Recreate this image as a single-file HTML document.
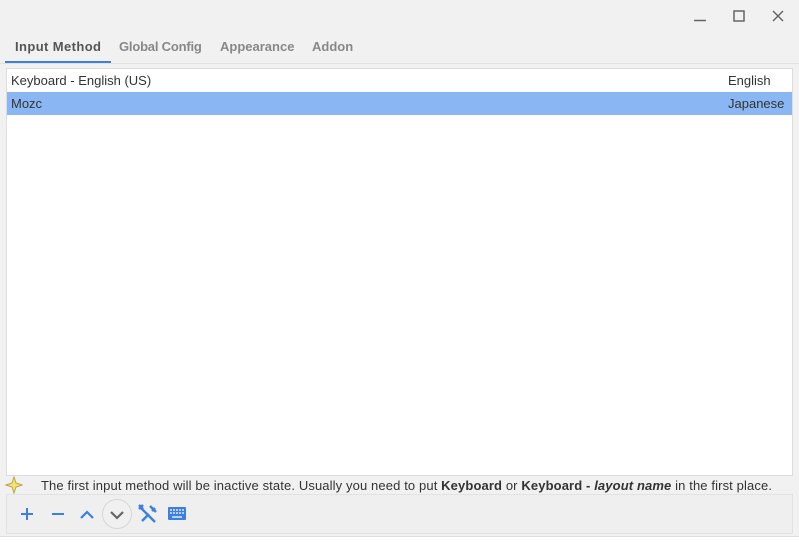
<!DOCTYPE html>
<html><head><meta charset="utf-8"><style>
body{margin:0;width:799px;height:541px;background:#f1f1f1;font-family:"Liberation Sans",sans-serif;font-size:13px;color:#333;position:relative;overflow:hidden}
.abs{position:absolute}
.tab{position:absolute;top:39px;font-weight:bold;color:#888;font-size:13px}
.row{position:absolute;left:7px;width:785px;height:23px;line-height:23px}
</style></head><body>
<div class="abs" style="left:0;top:536px;width:799px;height:5px;background:#fff;border-top:1px solid #ddd"></div>
<svg class="abs" style="left:690px;top:8px" width="100" height="16">
<path d="M4 12.5H16" stroke="#666" stroke-width="1.5"/>
<rect x="44" y="3" width="10" height="10" fill="none" stroke="#666" stroke-width="1.5"/>
<path d="M83 3L93 13M93 3L83 13" stroke="#666" stroke-width="1.5"/>
</svg>
<div class="tab" style="left:15px;color:#555;letter-spacing:0.4px">Input Method</div>
<div class="tab" style="left:119px;letter-spacing:-0.2px">Global Config</div>
<div class="tab" style="left:220px">Appearance</div>
<div class="tab" style="left:312px">Addon</div>
<div class="abs" style="left:5px;top:61px;width:106px;height:2px;background:#3d7fe0"></div>
<div class="abs" style="left:0;top:63px;width:799px;height:1px;background:#e2e2e2"></div>
<div class="abs" style="left:6px;top:68px;width:785px;height:406px;background:#fff;border:1px solid #ddd"></div>
<div class="row" style="top:69px"><span style="margin-left:4px">Keyboard - English (US)</span><span style="position:absolute;left:721px">English</span></div>
<div class="row" style="top:92px;background:#8ab6f3"><span style="margin-left:4px">Mozc</span><span style="position:absolute;left:721px">Japanese</span></div>
<svg class="abs" style="left:5px;top:476px" width="18" height="18"><path d="M9 1L11 7L17 9L11 11L9 17L7 11L1 9L7 7Z" fill="#f3e27a" stroke="#b9a640" stroke-width="1"/></svg>
<div class="abs" style="left:41px;top:478px;white-space:nowrap;font-size:13px;letter-spacing:0.12px">The first input method will be inactive state. Usually you need to put <b>Keyboard</b> or <b>Keyboard - <i>layout name</i></b> in the first place.</div>
<div class="abs" style="left:6px;top:494px;width:785px;height:38px;background:#efefef;border:1px solid #e2e2e2"></div>
<svg class="abs" style="left:6px;top:494px" width="200" height="40">
<path d="M15 20H27M21 14V26" stroke="#3d7fe0" stroke-width="2"/>
<path d="M46 20H58" stroke="#3d7fe0" stroke-width="2"/>
<path d="M75 24L81 18L87 24" fill="none" stroke="#3d7fe0" stroke-width="2.2"/>
<circle cx="111" cy="20" r="14.5" fill="#f0f0f0" stroke="#d6d6d6"/>
<path d="M105 18L111 24L117 18" fill="none" stroke="#666" stroke-width="2.2"/>
<path d="M134 13L149 28M136 27L143 20M146 17L149 14M144 12L150 18M133 11L137 15M133 15L137 11" stroke="#3d7fe0" stroke-width="2.4"/>
<rect x="162" y="13" width="18" height="13" rx="1" fill="#3d7fe0"/>
<path d="M164 16h2M167 16h2M170 16h2M173 16h2M176 16h2M164 19h2M167 19h2M170 19h2M173 19h2M176 19h2M166 23h10" stroke="#fff" stroke-width="1.3"/>
</svg>
</body></html>
